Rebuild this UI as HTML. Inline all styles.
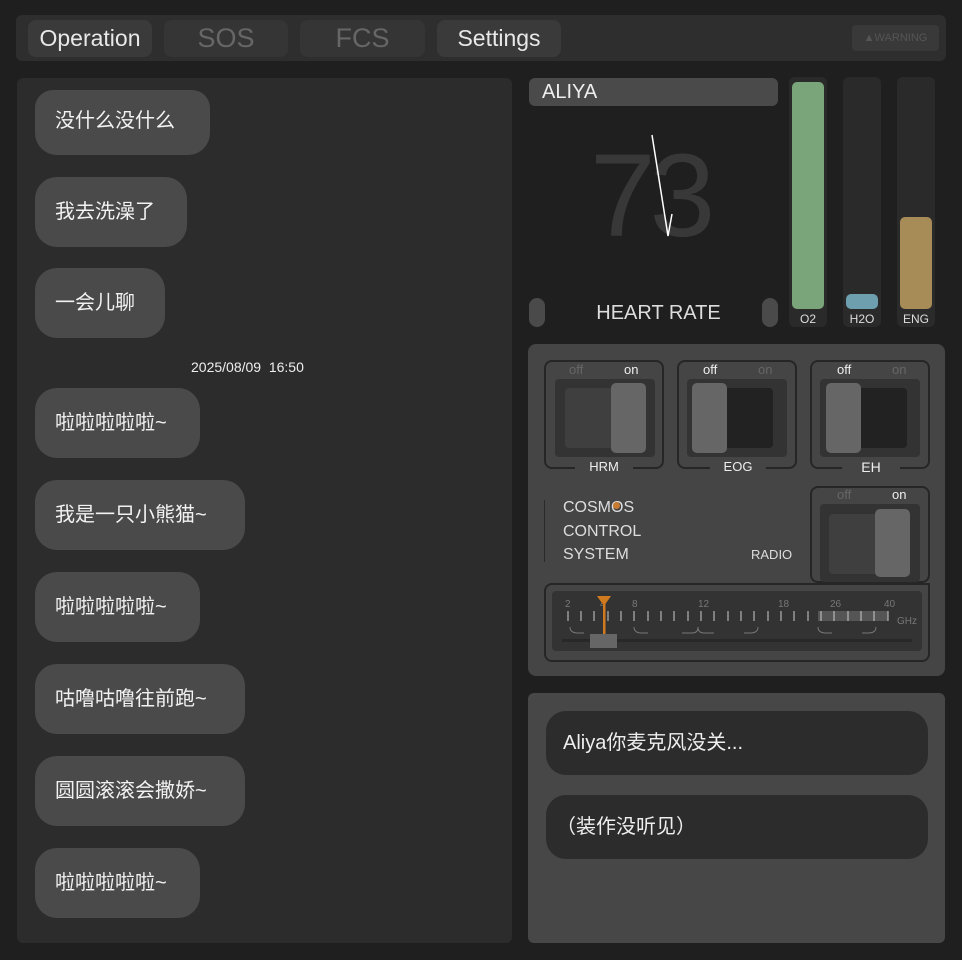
<!DOCTYPE html>
<html><head><meta charset="utf-8"><style>
*{box-sizing:border-box;margin:0;padding:0}
body{width:962px;height:960px;background:#1f1f1f;font-family:"Liberation Sans","Noto Sans CJK SC",sans-serif;color:#eee;position:relative;overflow:hidden}
.a{position:absolute}
.tab{position:absolute;top:20px;height:37px;background:#3a3a3a;border-radius:8px;font-size:23px;text-align:center;line-height:36px}
.bub{position:absolute;left:35px;height:70px;background:#4a4a4a;border-radius:22px;font-size:20px;line-height:70px;padding-left:20px;color:#f2f2f2}
.sw{position:absolute;border:2px solid #262626;border-radius:8px}
.lbl{position:absolute;font-size:13px}
.bar{position:absolute;top:77px;width:38px;height:250px;background:#2a2a2a;border-radius:6px}
.fill{position:absolute;left:3px;width:32px;border-radius:5px}
.bl{position:absolute;bottom:1px;width:100%;text-align:center;font-size:12px;color:#ddd}
</style></head><body>
<div class="a" style="left:16px;top:15px;width:930px;height:46px;background:#2e2e2e;border-radius:6px"></div>
<div class="tab" style="left:28px;width:124px;color:#e8e8e8">Operation</div>
<div class="tab" style="left:164px;width:124px;color:#666;background:#353535;font-size:27px">SOS</div>
<div class="tab" style="left:300px;width:125px;color:#666;background:#353535;font-size:27px">FCS</div>
<div class="tab" style="left:437px;width:124px;color:#e8e8e8">Settings</div>
<div class="a" style="left:852px;top:25px;width:87px;height:26px;background:#393939;border-radius:4px;color:#555;font-size:11px;line-height:26px;text-align:center">▲WARNING</div>

<div class="a" style="left:17px;top:78px;width:495px;height:865px;background:#2c2c2c;border-radius:6px;overflow:hidden">
</div>
<div class="bub" style="top:90px;height:65px;line-height:62px;width:175px;border-radius:18px 18px 22px 22px">没什么没什么</div>
<div class="bub" style="top:177px;width:152px">我去洗澡了</div>
<div class="bub" style="top:268px;width:130px">一会儿聊</div>
<div class="a" style="left:191px;top:359px;font-size:14px;color:#eee">2025/08/09&nbsp; 16:50</div>
<div class="bub" style="top:388px;width:165px">啦啦啦啦啦~</div>
<div class="bub" style="top:480px;width:210px">我是一只小熊猫~</div>
<div class="bub" style="top:572px;width:165px">啦啦啦啦啦~</div>
<div class="bub" style="top:664px;width:210px">咕噜咕噜往前跑~</div>
<div class="bub" style="top:756px;width:210px">圆圆滚滚会撒娇~</div>
<div class="bub" style="top:848px;width:165px">啦啦啦啦啦~</div>

<div class="a" style="left:529px;top:78px;width:249px;height:28px;background:#4a4a4a;border-radius:6px;font-size:20px;line-height:28px;padding-left:13px">ALIYA</div>
<div class="a" style="left:590px;top:128px;font-size:118px;color:#383838;letter-spacing:-6px;font-weight:300">73</div>
<svg class="a" style="left:640px;top:130px" width="40" height="110"><polyline points="12,5 28,106 32,84" fill="none" stroke="#fff" stroke-width="1.5"/></svg>
<div class="a" style="left:529px;top:298px;width:16px;height:29px;background:#4a4a4a;border-radius:8px"></div>
<div class="a" style="left:762px;top:298px;width:16px;height:29px;background:#4a4a4a;border-radius:8px"></div>
<div class="a" style="left:545px;top:302px;width:227px;text-align:center;font-size:20px;color:#ddd">HEART RATE</div>
<div class="bar" style="left:789px"><div class="fill" style="top:5px;height:227px;background:#7aa57a"></div><div class="bl">O2</div></div>
<div class="bar" style="left:843px"><div class="fill" style="top:217px;height:15px;background:#6e9fae"></div><div class="bl">H2O</div></div>
<div class="bar" style="left:897px"><div class="fill" style="top:140px;height:92px;background:#a88c58"></div><div class="bl">ENG</div></div>

<div class="a" style="left:528px;top:344px;width:417px;height:332px;background:#454545;border-radius:8px"></div>
<!-- HRM -->
<div class="sw" style="left:544px;top:360px;width:120px;height:109px"></div>
<div class="lbl" style="left:569px;top:362px;color:#666">off</div><div class="lbl" style="left:624px;top:362px">on</div>
<div class="a" style="left:555px;top:379px;width:100px;height:78px;background:#333;border-radius:4px"></div>
<div class="a" style="left:565px;top:388px;width:80px;height:60px;background:#3f3f3f;border-radius:4px"></div>
<div class="a" style="left:611px;top:383px;width:35px;height:70px;background:#666;border-radius:5px"></div>
<div class="a" style="left:575px;top:459px;width:58px;background:#454545;text-align:center;font-size:13px">HRM</div>
<!-- EOG -->
<div class="sw" style="left:677px;top:360px;width:120px;height:109px"></div>
<div class="lbl" style="left:703px;top:362px">off</div><div class="lbl" style="left:758px;top:362px;color:#666">on</div>
<div class="a" style="left:687px;top:379px;width:100px;height:78px;background:#333;border-radius:4px"></div>
<div class="a" style="left:693px;top:388px;width:80px;height:60px;background:#222;border-radius:4px"></div>
<div class="a" style="left:692px;top:383px;width:35px;height:70px;background:#666;border-radius:5px"></div>
<div class="a" style="left:710px;top:459px;width:56px;background:#454545;text-align:center;font-size:13px">EOG</div>
<!-- EH -->
<div class="sw" style="left:810px;top:360px;width:120px;height:109px"></div>
<div class="lbl" style="left:837px;top:362px">off</div><div class="lbl" style="left:892px;top:362px;color:#666">on</div>
<div class="a" style="left:820px;top:379px;width:100px;height:78px;background:#333;border-radius:4px"></div>
<div class="a" style="left:827px;top:388px;width:80px;height:60px;background:#222;border-radius:4px"></div>
<div class="a" style="left:826px;top:383px;width:35px;height:70px;background:#666;border-radius:5px"></div>
<div class="a" style="left:842px;top:459px;width:58px;background:#454545;text-align:center;font-size:14px">EH</div>
<!-- cosmos -->
<div class="a" style="left:544px;top:500px;width:1px;height:62px;background:#2a2a2a"></div>
<div class="a" style="left:563px;top:496px;font-size:16px;line-height:23.5px;color:#ddd">COSMOS<br>CONTROL<br>SYSTEM</div>
<div class="a" style="left:613px;top:502px;width:7px;height:7px;border-radius:50%;background:#c87a30"></div>
<div class="a" style="left:751px;top:547px;font-size:13px;color:#ddd">RADIO</div>
<div class="sw" style="left:810px;top:486px;width:120px;height:97px"></div>
<div class="lbl" style="left:837px;top:487px;color:#666">off</div><div class="lbl" style="left:892px;top:487px">on</div>
<div class="a" style="left:820px;top:504px;width:100px;height:78px;background:#333;border-radius:4px"></div>
<div class="a" style="left:829px;top:514px;width:80px;height:60px;background:#3f3f3f;border-radius:4px"></div>
<div class="a" style="left:875px;top:509px;width:35px;height:68px;background:#666;border-radius:5px"></div>
<div class="sw" style="left:544px;top:583px;width:386px;height:79px;border-top-right-radius:0"></div>
<div class="a" style="left:552px;top:591px;width:370px;height:60px;background:#333;border-radius:4px"></div>
<svg class="a" style="left:552px;top:591px" width="370" height="60" font-family="Liberation Sans" font-size="10" fill="#777">
<text x="13" y="16">2</text><text x="48" y="16">4</text><text x="80" y="16">8</text><text x="146" y="16">12</text><text x="226" y="16">18</text><text x="278" y="16">26</text><text x="332" y="16">40</text><text x="345" y="33">GHz</text>
<rect x="266" y="20" width="70" height="10" fill="#555"/>
<g stroke="#ccc" stroke-width="1"><path d="M16 20v10M29 20v10M42 20v10M56 20v10M69 20v10M82 20v10M96 20v10M109 20v10M122 20v10M136 20v10M149 20v10M162 20v10M176 20v10M189 20v10M202 20v10M216 20v10M229 20v10M242 20v10M256 20v10M269 20v10M282 20v10M296 20v10M309 20v10M322 20v10M336 20v10"/></g>
<g stroke="#777" fill="none"><path d="M18 36q0 6 8 6h6M82 36q0 6 8 6h6M130 42h10q6 0 6-6q0 6 6 6h10M192 42h6q8 0 8-6M266 36q0 6 8 6h6M310 42h6q8 0 8-6"/></g>
<rect x="10" y="48" width="350" height="3" fill="#282828"/>
<path d="M45 5h14l-7 10z" fill="#d07a20"/><rect x="51" y="12" width="2.5" height="32" fill="#d07a20"/>
<rect x="38" y="43" width="27" height="14" fill="#666"/>
</svg>

<div class="a" style="left:528px;top:693px;width:417px;height:250px;background:#474747;border-radius:6px"></div>
<div class="a" style="left:546px;top:711px;width:382px;height:64px;background:#2c2c2c;border-radius:20px;font-size:20px;line-height:64px;padding-left:17px">Aliya你麦克风没关...</div>
<div class="a" style="left:546px;top:795px;width:382px;height:64px;background:#2c2c2c;border-radius:20px;font-size:20px;line-height:64px;padding-left:10px">（装作没听见）</div>
</body></html>
